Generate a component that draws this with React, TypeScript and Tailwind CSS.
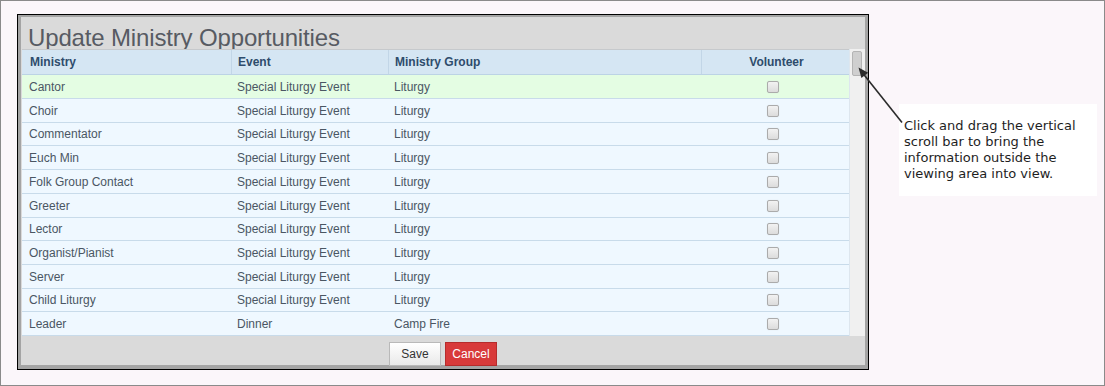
import React from "react";

type Row = { m: string; e: string; g: string; h: string; bg: string };

const rows: Row[] = [
  { m: "Cantor", e: "Special Liturgy Event", g: "Liturgy", h: "h-[24px]", bg: "bg-[#e4fde3]" },
  { m: "Choir", e: "Special Liturgy Event", g: "Liturgy", h: "h-[24px]", bg: "bg-[#eff8ff]" },
  { m: "Commentator", e: "Special Liturgy Event", g: "Liturgy", h: "h-[23px]", bg: "bg-[#eff8ff]" },
  { m: "Euch Min", e: "Special Liturgy Event", g: "Liturgy", h: "h-[24px]", bg: "bg-[#eff8ff]" },
  { m: "Folk Group Contact", e: "Special Liturgy Event", g: "Liturgy", h: "h-[24px]", bg: "bg-[#eff8ff]" },
  { m: "Greeter", e: "Special Liturgy Event", g: "Liturgy", h: "h-[24px]", bg: "bg-[#eff8ff]" },
  { m: "Lector", e: "Special Liturgy Event", g: "Liturgy", h: "h-[23px]", bg: "bg-[#eff8ff]" },
  { m: "Organist/Pianist", e: "Special Liturgy Event", g: "Liturgy", h: "h-[24px]", bg: "bg-[#eff8ff]" },
  { m: "Server", e: "Special Liturgy Event", g: "Liturgy", h: "h-[24px]", bg: "bg-[#eff8ff]" },
  { m: "Child Liturgy", e: "Special Liturgy Event", g: "Liturgy", h: "h-[23px]", bg: "bg-[#eff8ff]" },
  { m: "Leader", e: "Dinner", g: "Camp Fire", h: "h-[24px]", bg: "bg-[#eff8ff]" },
];

function Checkbox() {
  return (
    <div className="w-[12px] h-[12px] rounded-[2px] border border-[#ababab] bg-gradient-to-b from-[#f2f2f2] to-[#dcdcdc] shadow-[0_0_1px_rgba(0,0,0,0.15)]" />
  );
}

export default function App() {
  return (
    <div className="relative w-[1105px] h-[386px] border border-[#8a8a8a] bg-[#fbf6fa] flex items-start font-['Liberation_Sans',Arial,sans-serif]">
      {/* Dialog */}
      <div className="ml-[16px] mt-[13px] w-[852px] h-[356px] border border-black">
        <div className="w-full h-full border-l-[3px] border-t-[2px] border-r-[3px] border-b-[4px] border-[#a4a4a4] bg-[#dadada] flex flex-col">
          {/* Title */}
          <div className="h-[32px] shrink-0 pl-[7px] pt-[8px] text-[24px] leading-[25px] text-[#575b63] tracking-[-0.15px] whitespace-nowrap">
            Update Ministry Opportunities
          </div>
          {/* Grid + scrollbar */}
          <div className="flex h-[287px] shrink-0 pl-[1px]">
            <div className="w-[827px] flex flex-col text-[12px]">
              <div className="flex h-[26px] bg-[#d5e6f3] border-t border-b border-t-[#c6c9cc] border-b-[#bcd3e5] font-bold text-[#2e4c6c] items-center">
                <div className="w-[209px] pl-[8px]">Ministry</div>
                <div className="w-[157px] h-full flex items-center pl-[6px] border-l border-[#c2d6e7]">Event</div>
                <div className="w-[313px] h-full flex items-center pl-[6px] border-l border-[#c2d6e7]">Ministry Group</div>
                <div className="w-[148px] h-full flex items-center justify-center pl-[2px] border-l border-[#c2d6e7]">Volunteer</div>
              </div>
              {rows.map((r) => (
                <div
                  key={r.m}
                  className={`flex items-center border-b border-[#c8dbea] text-[#4a5663] ${r.h} ${r.bg}`}
                >
                  <div className="w-[209px] pl-[7px]">{r.m}</div>
                  <div className="w-[157px] pl-[6px]">{r.e}</div>
                  <div className="w-[313px] pl-[6px]">{r.g}</div>
                  <div className="w-[148px] flex justify-center pr-[4px]">
                    <Checkbox />
                  </div>
                </div>
              ))}
            </div>
            <div className="w-[16px] bg-[#f0f0f0] border-l border-[#dde6ee] pt-[2px] pl-[2px]">
              <div className="w-[10px] h-[25px] rounded-[2px] bg-[#cfcfcf] border border-[#b4b4b4]" />
            </div>
          </div>
          {/* Footer */}
          <div className="h-[29px] shrink-0 flex justify-center items-start pt-[6px] gap-[4px] text-[12px]">
            <button className="w-[52px] h-[24px] border border-[#b9b9b9] bg-gradient-to-b from-[#ffffff] to-[#e9e9e9] text-[#333] leading-none">
              Save
            </button>
            <button className="w-[52px] h-[24px] border border-[#b52c2c] bg-[#d83a3a] text-white leading-none">
              Cancel
            </button>
          </div>
        </div>
      </div>

      {/* Callout */}
      <div className="ml-[30px] mt-[103px] w-[198px] h-[92px] bg-white pl-[5px] pt-[14px] text-[13px] leading-[16px] text-[#1e1e1e] font-['DejaVu_Sans',Verdana,sans-serif]">
        Click and drag the vertical
        <br />
        scroll bar to bring the
        <br />
        information outside the
        <br />
        viewing area into view.
      </div>

      {/* Arrow annotation */}
      <svg
        className="absolute left-[-1px] top-[-1px] pointer-events-none"
        width="1105"
        height="386"
        viewBox="0 0 1105 386"
      >
        <line x1="902" y1="122.5" x2="863" y2="73.5" stroke="#2b2b2b" strokeWidth="1.6" />
        <polygon points="858.5,67.5 868.2,72.8 861.4,78.1" fill="#2b2b2b" />
      </svg>
    </div>
  );
}
